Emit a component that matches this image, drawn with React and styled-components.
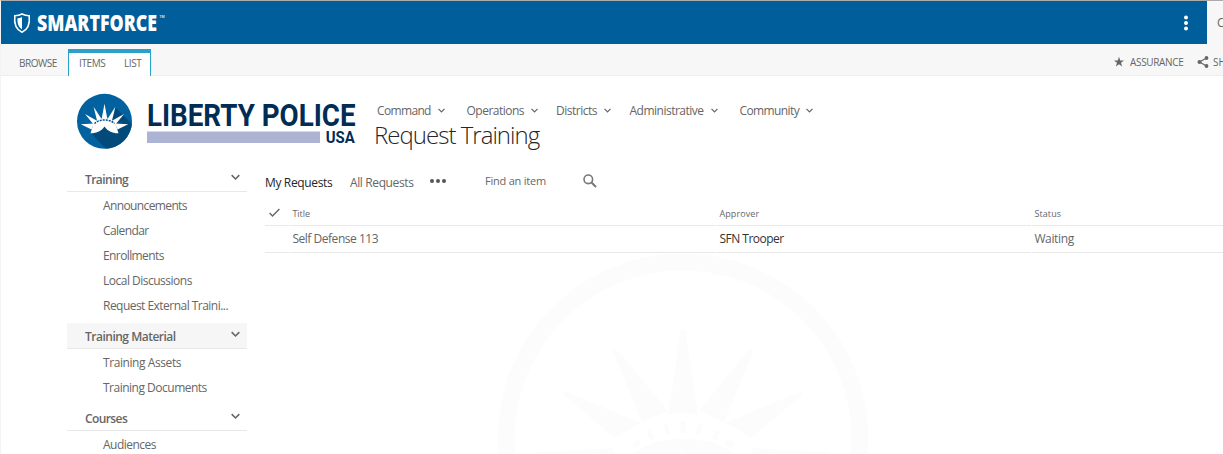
import React from "react";
import styled, { createGlobalStyle } from "styled-components";

const Global = createGlobalStyle`
  * { box-sizing: border-box; }
  html, body { margin: 0; height: 454px; overflow: hidden; background: #fff; }
  body { font-family: "Open Sans", "Noto Sans", sans-serif; font-size: 12px; color: #666; }
`;

const Page = styled.div`
  width: 1223px;
  height: 454px;
  overflow: hidden;
  border-top: 1px solid #ababab;
  border-left: 1px solid #f3f3f3;
  background: #fff;
`;

const SuiteBar = styled.header`
  display: flex;
  height: 43px;
  background: #f7f7f7;
`;
const SuiteBrand = styled.div`
  display: flex;
  align-items: center;
  justify-content: space-between;
  flex: 0 0 1206px;
  padding: 0 18px 0 11px;
  background: #005e9a;
`;
const SuiteUser = styled.div`
  flex: 1;
  padding-left: 10px;
  line-height: 43px;
  overflow: hidden;
  white-space: nowrap;
`;

const Ribbon = styled.div`
  display: flex;
  height: 32px;
  background: #f7f7f7;
  border-bottom: 1px solid #eeeeee;
  font-size: 10px;
  line-height: 26px;
  white-space: nowrap;
`;
const RibbonTab = styled.span`
  flex: none;
  width: ${(p) => p.$width}px;
  padding-left: ${(p) => p.$indent}px;
  padding-top: ${(p) => p.$top || 0}px;
  letter-spacing: ${(p) => p.$spacing || 0}px;
`;
const TabGroup = styled.div`
  display: flex;
  width: 83px;
  height: 27px;
  margin-top: 5px;
  border: 1px solid #2aa0cb;
  border-top-width: 4px;
  border-bottom: 0;
  background: #fff;
  line-height: 20px;
`;
const RibbonActions = styled.div`
  display: flex;
  margin-left: auto;
  width: 109px;
  padding-top: 5px;
`;
const ActionIcon = styled.svg`
  flex: none;
  width: 12px;
  height: 12px;
  margin: 7px 4px 0 0;
`;
const Action = styled.span`
  flex: none;
  width: ${(p) => p.$width}px;
  letter-spacing: ${(p) => p.$spacing || 0}px;
`;

const SiteHeader = styled.div`
  display: flex;
  height: 90px;
  padding: 17px 0 0 76px;
`;
const SiteLogo = styled.svg`
  flex: none;
  width: 282px;
  height: 58px;
`;
const SiteTitles = styled.div`
  padding-left: 15px;
`;
const TopNav = styled.nav`
  display: flex;
  height: 26px;
  padding: 4px 0 0 3px;
  line-height: 28px;
  white-space: nowrap;
`;
const TopLink = styled.a`
  display: flex;
  align-items: center;
  gap: 7px;
  height: 28px;
  width: ${(p) => p.$width}px;
  letter-spacing: ${(p) => p.$spacing}px;
`;
const PageTitle = styled.h1`
  margin: 0;
  font-weight: 300;
  font-size: 24px;
  line-height: 31px;
  letter-spacing: -0.98px;
  color: #262626;
  white-space: nowrap;
`;

const Body = styled.div`
  display: flex;
`;
const Sidebar = styled.aside`
  flex: none;
  width: 180px;
  margin-left: 66px;
`;
const GroupHead = styled.div`
  display: flex;
  align-items: center;
  justify-content: space-between;
  height: 26px;
  padding: 2px 7px 0 18px;
  border-bottom: 1px solid #e8e8e8;
  background: ${(p) => (p.$active ? "#f6f6f6" : "transparent")};
  font-weight: 600;
  letter-spacing: ${(p) => p.$spacing}px;
  svg { margin-top: -4px; }
`;
const GroupItems = styled.div`
  padding: 1px 0 5px 36px;
`;
const SideLink = styled.a`
  display: block;
  height: 25px;
  line-height: 25px;
  white-space: nowrap;
  letter-spacing: ${(p) => p.$spacing}px;
`;

const Main = styled.main`
  position: relative;
  flex: 1;
  height: 288px;
  margin-left: 18px;
  overflow: hidden;
`;
const Watermark = styled.svg`
  position: absolute;
  left: 231px;
  top: 86px;
  width: 374px;
  height: 374px;
`;
const ViewBar = styled.div`
  display: flex;
  align-items: center;
  height: 32px;
  white-space: nowrap;
`;
const View = styled.a`
  width: ${(p) => p.$width}px;
  color: ${(p) => (p.$current ? "#262626" : "#666")};
  font-weight: ${(p) => (p.$current ? 500 : 400)};
  letter-spacing: ${(p) => p.$spacing}px;
`;
const MoreDots = styled.svg`
  width: 16px;
  height: 4px;
  margin: -2px 39px 0 0;
`;
const Search = styled.div`
  display: flex;
  align-items: center;
  justify-content: space-between;
  width: 112px;
  font-size: 11px;
  letter-spacing: ${(p) => p.$spacing}px;
  margin-top: -3px;
`;
const Row = styled.div`
  position: relative;
  display: grid;
  grid-template-columns: 24px 426px 314px 1fr;
  grid-template-rows: 100%;
  column-gap: 1px;
  height: ${(p) => p.$height}px;
  line-height: ${(p) => p.$line}px;
  font-size: ${(p) => p.$size}px;
`;
const Cell = styled.div`
  padding-left: ${(p) => (p.$first ? 4 : 2.4)}px;
  border-bottom: 1px solid #e9e9e9;
  color: ${(p) => (p.$dark ? "#333" : "inherit")};
  letter-spacing: ${(p) => p.$spacing || 0}px;
  white-space: nowrap;
`;

const Chevron = ({ size = 7 }) => (
  <svg width={size} height={size * 0.75} viewBox="0 0 8 6" fill="none" stroke="#666" strokeWidth="1.4">
    <path d="M0.6 1 4 4.4 7.4 1" />
  </svg>
);

const SuiteLogo = () => (
  <svg width="154" height="24" viewBox="0 0 154 24" fill="#fff">
    <path d="M10 3C7.600 4.300 5 4.700 2.800 4.700 2 12 3.600 18.500 10 21.200 16.400 18.500 18 12 17.200 4.700 15 4.700 12.400 4.300 10 3Z" fill="none" stroke="#fff" strokeWidth="1.600" />
    <path d="M10 6C8.500 6.800 7 7.200 5.500 7.300 5.200 12 6.200 16 10 18.200Z" />
    <text x="25" y="20" fontFamily="Open Sans" fontWeight="800" fontSize="22" textLength="120" lengthAdjust="spacingAndGlyphs">SMARTFORCE</text>
    <text x="147.500" y="7" fontFamily="Open Sans" fontWeight="600" fontSize="4" textLength="5" lengthAdjust="spacingAndGlyphs">TM</text>
  </svg>
);

const LibertyLogo = () => (
  <SiteLogo viewBox="77 93 282 58">
    <defs>
      <clipPath id="disc"><circle cx="104.500" cy="121.300" r="27.500" /></clipPath>
    </defs>
    <circle cx="104.500" cy="121.300" r="27.500" fill="#01629f" />
    <path clipPath="url(#disc)" d="M115.500 107.500 140 132 130 152H109L91 133 107 120Z" fill="#014a7a" />
    <g fill="#fff">
      <path d="M104.500 103.500 107.300 118.500H101.700Z" />
      <path d="M93.600 106.800 101.200 118.400 97 120.400Z" />
      <path d="M115.400 106.800 107.800 118.400 112 120.400Z" />
      <path d="M85 114 96.500 120.500 93.500 124.500Z" />
      <path d="M124 114 112.500 120.500 115.500 124.500Z" />
      <path d="M80.800 124.200 94 123.500 91.500 129.500Z" />
      <path d="M128.200 124.200 115 123.500 117.500 129.500Z" />
      <path d="M92.500 127C94.500 115 114.500 115 116.500 127L118.500 133.300C112.500 133.500 107.500 131 104.500 126.500 101.500 131 96.500 133.500 90.500 133.300Z" />
    </g>
    <path d="M94.500 123.500C99 118.800 110 118.800 114.500 123.500" fill="none" stroke="#01518a" strokeWidth="1.500" strokeDasharray="2 1" />
    <g fill="#002c55" fontFamily="Roboto" fontWeight="700">
      <text x="147" y="126.200" fontSize="31.500" textLength="208.500" lengthAdjust="spacingAndGlyphs">LIBERTY POLICE</text>
      <text x="325.700" y="143.300" fontSize="16.500" textLength="29" lengthAdjust="spacingAndGlyphs">USA</text>
    </g>
    <path d="M147 131.500H320V143H147Z" fill="#adb3d3" />
  </SiteLogo>
);

const Crown = () => (
  <Watermark viewBox="495 252 374 374" fill="#fcfcfc">
    <circle cx="682" cy="439" r="177" fill="none" stroke="#fcfcfc" strokeWidth="17" />
    <path d="M679.500 331Q682 327 684.500 331L697 415Q682 411 667.500 415Z" />
    <path d="M612 352Q612 348 617 351L667 411 641 422Z" />
    <path d="M752 352Q752 348 747 351L698 411 723 422Z" />
    <path d="M563 395Q562 391 568 393L640 423Q625 430 614 438Z" />
    <path d="M801 395Q802 391 796 393L724 423Q739 430 750 438Z" />
    <path d="M536 452 612 448 618 460H536ZM828 452 752 448 746 460H828Z" />
    <path d="M628 456Q648 439 682 439 716 439 736 456L684 456 681 448 680 456Z" />
    <path d="M631 444 637 438 640 444 634 448ZM645 431 649 430 653 438 649 440ZM663 424 667 423 669 434 665 435ZM679.500 421H684.500V433H679.500ZM697 423 702 424 699 435 695 434ZM715 430 719 431 715 440 711 438ZM727 438 733 444 730 448 724 444Z" />
  </Watermark>
);

const topLinks = [
  ["Command", 89.5, -0.65], ["Operations", 89.5, -0.5], ["Districts", 73.5, -0.5],
  ["Administrative", 110, -0.5], ["Community", 76, -0.6],
];
const groups = [
  { name: "Training", spacing: -0.55, items: [["Announcements", -0.62], ["Calendar", -0.58], ["Enrollments", -0.6], ["Local Discussions", -0.5], ["Request External Traini...", -0.53]] },
  { name: "Training Material", spacing: -0.5, active: true, items: [["Training Assets", -0.42], ["Training Documents", -0.5]] },
  { name: "Courses", spacing: -0.6, items: [["Audiences", -0.53]] },
];

export default function App() {
  return (
    <Page>
      <Global />
      <SuiteBar>
        <SuiteBrand>
          <SuiteLogo />
          <svg width="6" height="18" viewBox="0 0 6 18" fill="#fff">
            <circle cx="3" cy="3.500" r="2" /><circle cx="3" cy="9" r="2" /><circle cx="3" cy="14.500" r="2" />
          </svg>
        </SuiteBrand>
        <SuiteUser>Chris</SuiteUser>
      </SuiteBar>
      <Ribbon>
        <RibbonTab $width={67} $indent={18} $top={6} $spacing={-0.5}>BROWSE</RibbonTab>
        <TabGroup>
          <RibbonTab $width={46} $indent={10} $spacing={-0.4}>ITEMS</RibbonTab>
          <RibbonTab $width={30} $indent={9} $spacing={-0.4}>LIST</RibbonTab>
        </TabGroup>
        <RibbonActions>
          <ActionIcon viewBox="0 0 12 12" fill="#666">
            <path d="M5 .8 6.200 4.500H10L7 6.800 8.100 10.500 5 8.200 1.900 10.500 3 6.800 0 4.500H3.800Z" />
          </ActionIcon>
          <Action $width={67} $spacing={-0.33}>ASSURANCE</Action>
          <ActionIcon viewBox="0 0 12 12" fill="#666">
            <path d="M9.500 2 2.500 6 9.500 10" fill="none" stroke="#666" strokeWidth="1.200" />
            <circle cx="9.500" cy="2" r="1.900" /><circle cx="2.500" cy="6" r="2" /><circle cx="9.500" cy="10" r="1.900" />
          </ActionIcon>
          <Action $width={30}>SHARE</Action>
        </RibbonActions>
      </Ribbon>
      <SiteHeader>
        <LibertyLogo />
        <SiteTitles>
          <TopNav>
            {topLinks.map(([name, width, spacing]) => (
              <TopLink key={name} $width={width} $spacing={spacing}>{name}<Chevron /></TopLink>
            ))}
          </TopNav>
          <PageTitle>Request Training</PageTitle>
        </SiteTitles>
      </SiteHeader>
      <Body>
        <Sidebar>
          {groups.map((g) => (
            <div key={g.name}>
              <GroupHead $active={g.active} $spacing={g.spacing}>{g.name}<Chevron size={9} /></GroupHead>
              <GroupItems>
                {g.items.map(([name, spacing]) => <SideLink key={name} $spacing={spacing}>{name}</SideLink>)}
              </GroupItems>
            </div>
          ))}
        </Sidebar>
        <Main>
          <Crown />
          <ViewBar>
            <View $current $width={85} $spacing={-0.35}>My Requests</View>
            <View $width={80} $spacing={-0.38}>All Requests</View>
            <MoreDots viewBox="0 0 16 4" fill="#555"><circle cx="2" cy="2" r="2" /><circle cx="8" cy="2" r="2" /><circle cx="14" cy="2" r="2" /></MoreDots>
            <Search $spacing={-0.22}>
              Find an item
              <svg width="14" height="14" viewBox="0 0 14 14" fill="none" stroke="#777">
                <circle cx="5.300" cy="5.300" r="4.300" strokeWidth="1.600" /><path d="M8.500 8.500 13 13" strokeWidth="2" />
              </svg>
            </Search>
          </ViewBar>
          <Row $height={28} $line={32} $size={9}>
            <Cell $first>
              <svg width="11" height="9" viewBox="0 0 11 9" fill="none" stroke="#666" strokeWidth="1.400"><path d="M.6 5 3.500 8 10.400 1" /></svg>
            </Cell>
            <Cell>Title</Cell><Cell $spacing={0.1}>Approver</Cell><Cell $spacing={0.1}>Status</Cell>
          </Row>
          <Row $height={27} $line={26} $size={12}>
            <Cell $first /><Cell $spacing={-0.47}>Self Defense 113</Cell><Cell $dark $spacing={-0.5}>SFN Trooper</Cell><Cell $spacing={-0.35}>Waiting</Cell>
          </Row>
        </Main>
      </Body>
    </Page>
  );
}
